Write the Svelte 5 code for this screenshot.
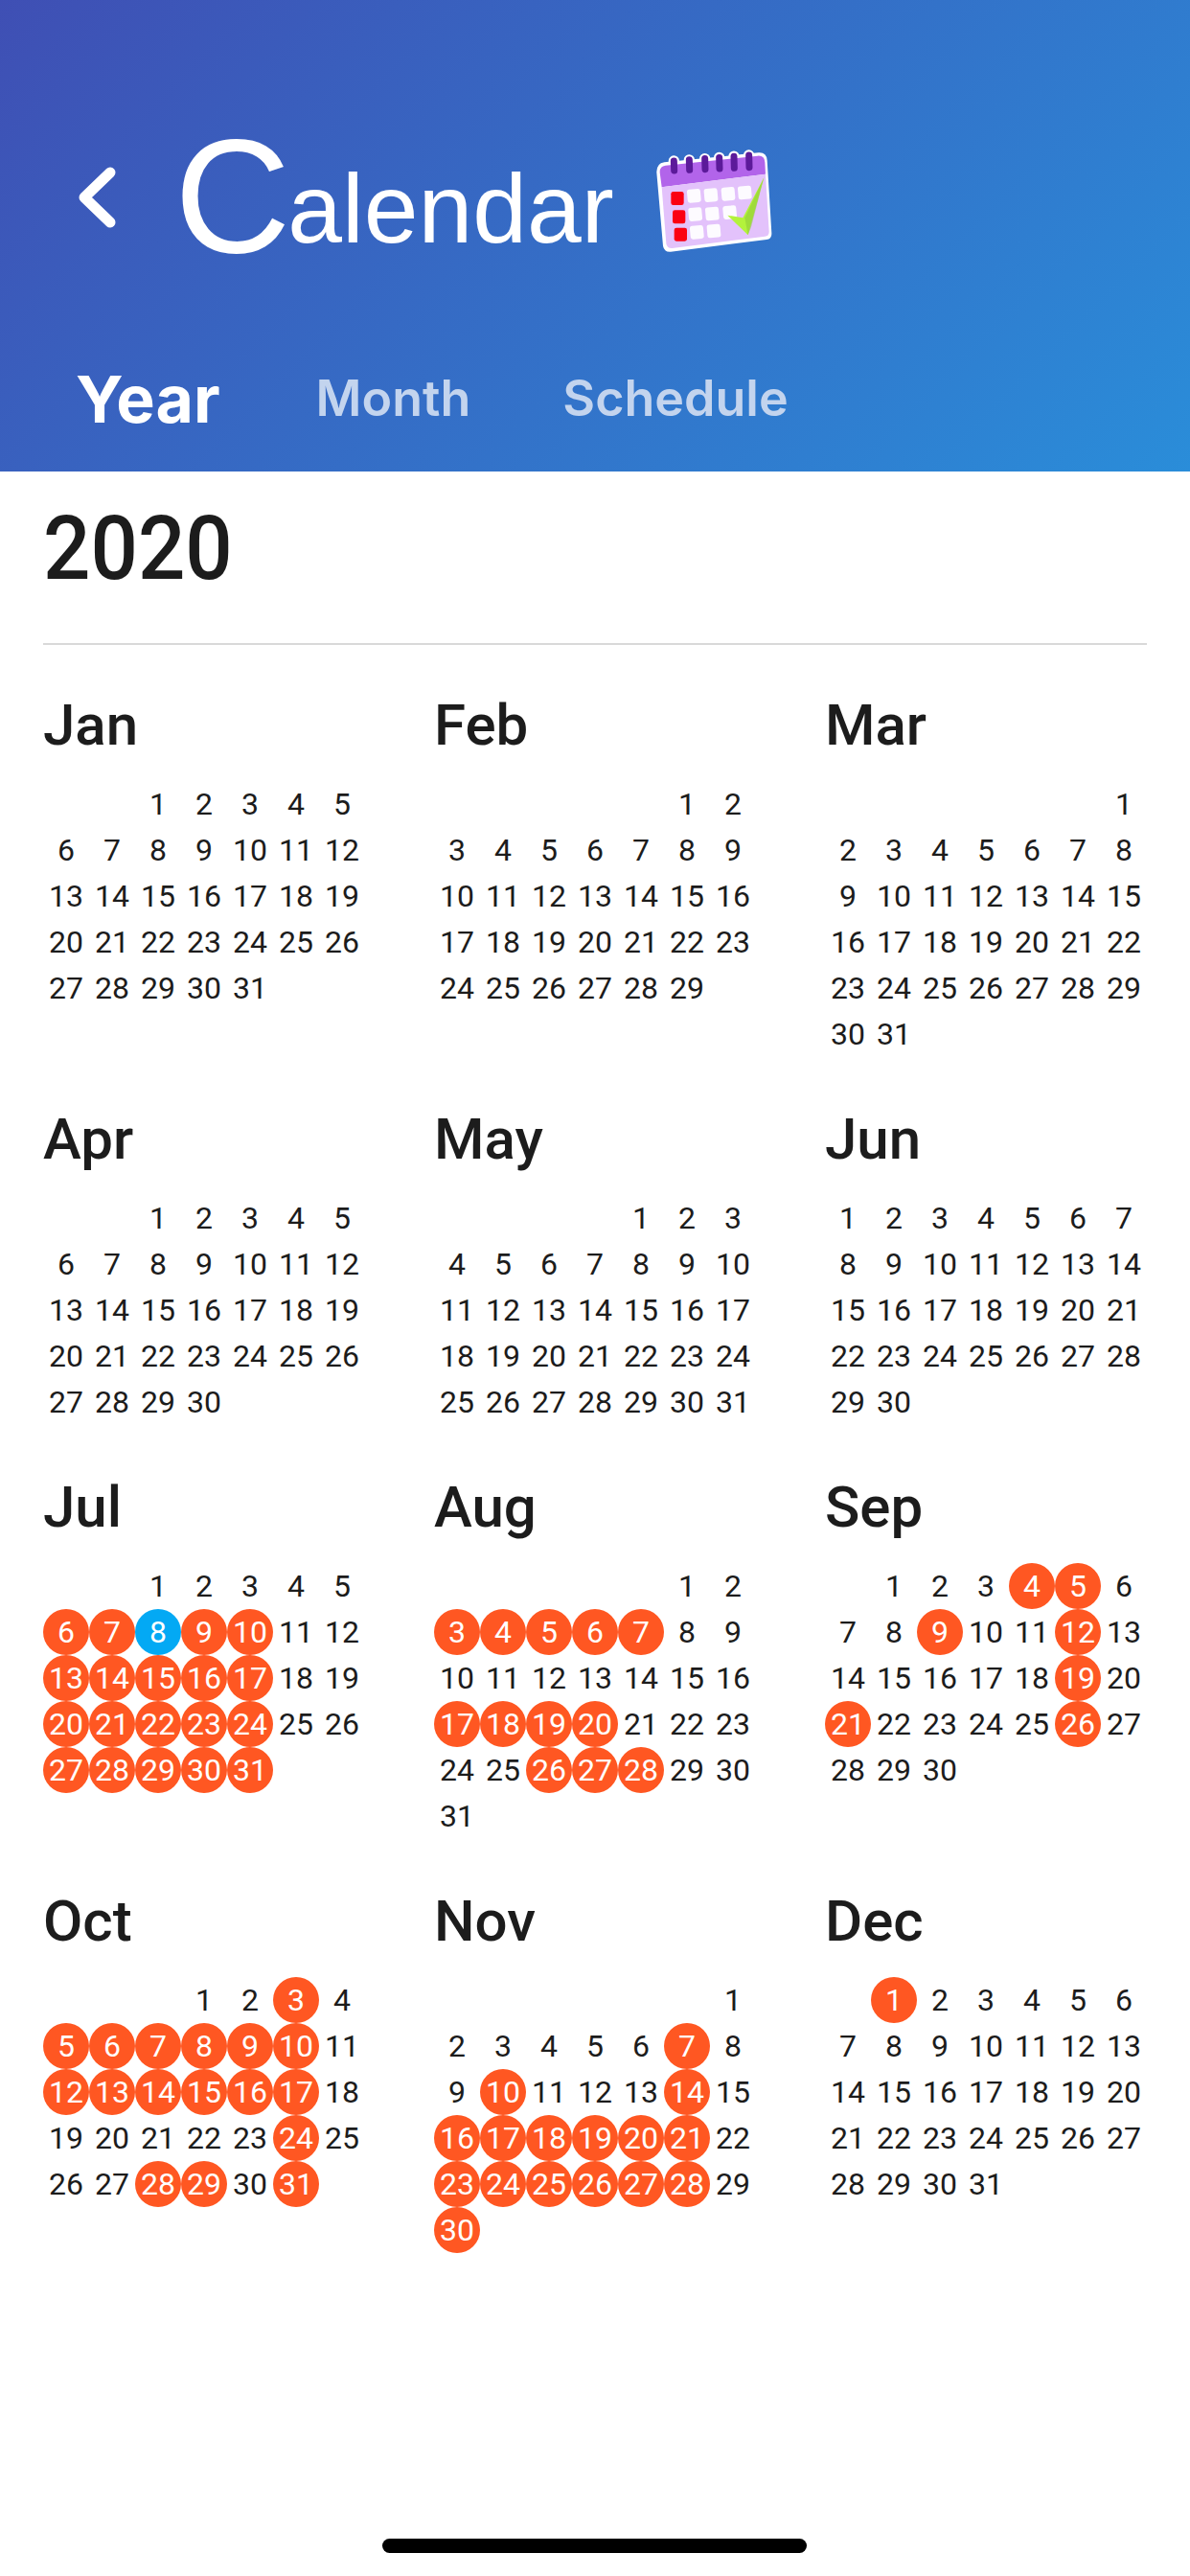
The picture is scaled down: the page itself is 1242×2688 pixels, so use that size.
<script>
  const months = [
    { name: 'Jan', offset: 2, days: 31, on: [] },
    { name: 'Feb', offset: 5, days: 29, on: [] },
    { name: 'Mar', offset: 6, days: 31, on: [] },
    { name: 'Apr', offset: 2, days: 30, on: [] },
    { name: 'May', offset: 4, days: 31, on: [] },
    { name: 'Jun', offset: 0, days: 30, on: [] },
    { name: 'Jul', offset: 2, days: 31, on: [6,7,9,10,13,14,15,16,17,20,21,22,23,24,27,28,29,30,31], today: 8 },
    { name: 'Aug', offset: 5, days: 31, on: [3,4,5,6,7,17,18,19,20,26,27,28] },
    { name: 'Sep', offset: 1, days: 30, on: [4,5,9,12,19,21,26] },
    { name: 'Oct', offset: 3, days: 31, on: [3,5,6,7,8,9,10,12,13,14,15,16,17,24,28,29,31] },
    { name: 'Nov', offset: 6, days: 30, on: [7,10,14,16,17,18,19,20,21,23,24,25,26,27,28,30] },
    { name: 'Dec', offset: 1, days: 31, on: [1] }
  ];
  const range = (n) => Array.from({ length: n }, (_, i) => i);
  const rings = [130, 178, 227, 272, 318, 365];
  const whites = [[172,172],[225,170],[279,166],[331,162],[176,230],[229,228],[284,224],[181,286],[234,282]];
  const reds = [[121,180],[126,238],[131,293]];
</script>

<div class="page">
  <header class="head">
    <div class="titlebar">
      <svg class="back" width="48" height="72" viewBox="0 0 48 72">
        <path d="M36 10 L9 36 L36 62" fill="none" stroke="#fff" stroke-width="11" stroke-linecap="round" stroke-linejoin="round" />
      </svg>
      <h1 class="title"><span class="cap">C</span>alendar</h1>
      <svg class="calicon" width="160" height="130" viewBox="0 0 480 390">
        <path d="M100 88 L395 58 Q420 56 422 82 L436 310 Q437 328 420 330 L120 368 Q100 370 96 350 L76 120 Q75 92 100 88 Z" fill="#fff" />
        {#each rings as x, i}
          <line x1={x} y1={84 - i * 3.6} x2={x + 1} y2={114 - i * 2} stroke="#fff" stroke-width="34" stroke-linecap="round" />
        {/each}
        <path d="M104 98 L392 68 Q414 66 415 88 L417 125 L92 166 L86 120 Q85 100 104 98 Z" fill="#b264ea" />
        <path d="M92 166 L417 125 L428 305 Q428 318 415 320 L125 357 Q108 358 106 342 Z" fill="#e3c2fb" />
        {#each rings as x, i}
          <line x1={x} y1={84 - i * 3.6} x2={x + 1} y2={114 - i * 2} stroke="#5c1a9a" stroke-width="21" stroke-linecap="round" />
        {/each}
        {#each reds as [x, y]}
          <rect {x} {y} width="40" height="42" rx="7" fill="#fb0012" />
        {/each}
        {#each whites as [x, y]}
          <rect {x} {y} width="42" height="42" rx="8" fill="#fdfbff" transform="rotate(-5 {x + 21} {y + 21})" />
        {/each}
        <path d="M412 136 L362 316 L298 254 L346 262 Z" fill="#b3f23c" />
        <path d="M412 136 L372 290 L362 316 L352 262 Z" fill="#8ec83a" opacity="0.55" />
      </svg>
    </div>
    <nav class="tabs">
      <span class="tab active">Year</span>
      <span class="tab">Month</span>
      <span class="tab">Schedule</span>
    </nav>
  </header>

  <main class="body">
    <div class="year"><span>2020</span></div>
    <div class="grid">
      {#each months as m}
        <section class="month">
          <h2>{m.name}</h2>
          <div class="days">
            {#each range(m.offset) as _}<span></span>{/each}
            {#each range(m.days) as i}
              {@const d = i + 1}
              <span class="day" class:on={m.on.includes(d)} class:today={m.today === d}>{d}</span>
            {/each}
          </div>
        </section>
      {/each}
    </div>
  </main>

  <div class="home"></div>
</div>

<style>
  :global(body) { margin: 0; background: #fff; }
  .page { width: 1242px; height: 2688px; position: relative; overflow: hidden; background: #fff; }
  .head {
    height: 492px;
    box-sizing: border-box;
    background: linear-gradient(135deg, #3f4fb4 0%, #2a8dd9 100%);
    padding: 140px 0 0 79px;
    color: #fff;
  }
  .titlebar { display: flex; align-items: flex-start; height: 130px; }
  .back { margin-top: 30px; flex: none; }
  .title {
    margin: 0 0 0 55px;
    font-family: "Liberation Sans", Arial, sans-serif;
    font-weight: 400;
    font-size: 102px;
    line-height: 130px;
    white-space: nowrap;
    width: 478px;
    flex: none;
  }
  .cap { font-size: 168px; letter-spacing: -3px; vertical-align: -10px; }
  .calicon { flex: none; }
  .tabs {
    display: flex;
    align-items: center;
    margin-top: 106px;
    line-height: 80px;
    font-family: Inter, "Liberation Sans", sans-serif;
  }
  .tab { font-size: 52px; font-weight: 600; color: #c3d4ee; margin-right: 96px; }
  .tab.active { font-size: 68px; font-weight: 700; color: #fff; margin-right: 100px; }

  .body { padding: 0 45px; font-family: Roboto, sans-serif; color: #1c1c1c; }
  .year {
    font-size: 87px;
    font-weight: 500;
    line-height: 100px;
    padding: 30px 0 49px;
    border-bottom: 2px solid #d9d9d9;
  }
  .year span { display: inline-block; transform: scaleY(1.06); }
  .grid { display: grid; grid-template-columns: 408px 408px 336px; margin-top: -2px; }
  .month { padding-top: 50px; }
  h2 { margin: 0; font-size: 60px; font-weight: 500; line-height: 71px; height: 94px; }
  .days { display: grid; grid-template-columns: repeat(7, 48px); grid-auto-rows: 48px; }
  .day {
    display: flex;
    align-items: center;
    justify-content: center;
    font-size: 32px;
    border-radius: 50%;
    color: #1c1c1c;
  }
  .day.on { background: #ff5722; color: #fff; }
  .day.today { background: #03a9f4; color: #fff; }
  .home {
    position: absolute;
    left: 399px;
    top: 2649px;
    width: 443px;
    height: 15px;
    border-radius: 8px;
    background: #000;
  }
</style>
